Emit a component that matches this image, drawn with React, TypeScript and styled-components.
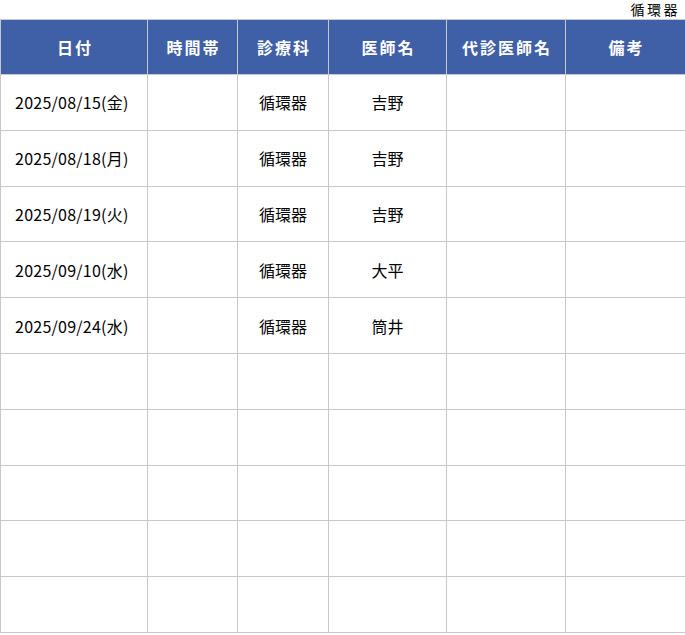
import React from "react";
import styled, { createGlobalStyle } from "styled-components";

const Global = createGlobalStyle`
  html, body { margin: 0; padding: 0; background: #fff; }
  body { font-family: "Noto Sans CJK JP", "Noto Sans", sans-serif; color: #000; }
`;

const Page = styled.div`
  width: 685px;
  display: flex;
  flex-direction: column;
`;

const Caption = styled.div`
  height: 19px;
  display: flex;
  justify-content: flex-end;
  align-items: center;
  padding-right: 5px;
  font-size: 14px;
  letter-spacing: 2.5px;
  line-height: 19px;
`;

const Table = styled.table`
  width: 685px;
  border-collapse: collapse;
  table-layout: fixed;
  border: 1px solid #c8c8c8;
`;

const HeadCell = styled.th`
  background: #3f60a6;
  color: #fff;
  font-weight: 700;
  font-size: 16px;
  letter-spacing: 2px;
  text-indent: 2px;
  text-align: center;
  border: 1px solid #c8c8c8;
  height: 54px;
  padding: 0;
`;

const BodyRow = styled.tr`
  height: 55.8px;
`;

const Cell = styled.td<{ $left?: boolean }>`
  border: 1px solid #c8c8c8;
  font-size: 16px;
  text-align: ${(p) => (p.$left ? "left" : "center")};
  padding: ${(p) => (p.$left ? "0 0 0 14px" : "0")};
  letter-spacing: ${(p) => (p.$left ? "0.25px" : "0")};
  white-space: nowrap;
`;

const widths = [147, 90, 91, 118, 119, 120];
const headers = ["日付", "時間帯", "診療科", "医師名", "代診医師名", "備考"];

const rows: string[][] = [
  ["2025/08/15(金)", "", "循環器", "吉野", "", ""],
  ["2025/08/18(月)", "", "循環器", "吉野", "", ""],
  ["2025/08/19(火)", "", "循環器", "吉野", "", ""],
  ["2025/09/10(水)", "", "循環器", "大平", "", ""],
  ["2025/09/24(水)", "", "循環器", "筒井", "", ""],
  ["", "", "", "", "", ""],
  ["", "", "", "", "", ""],
  ["", "", "", "", "", ""],
  ["", "", "", "", "", ""],
  ["", "", "", "", "", ""],
];

export default function App() {
  return (
    <Page>
      <Global />
      <Caption>循環器</Caption>
      <Table>
        <colgroup>
          {widths.map((w, i) => (
            <col key={i} style={{ width: w }} />
          ))}
        </colgroup>
        <thead>
          <tr>
            {headers.map((h) => (
              <HeadCell key={h}>{h}</HeadCell>
            ))}
          </tr>
        </thead>
        <tbody>
          {rows.map((r, i) => (
            <BodyRow key={i}>
              {r.map((c, j) => (
                <Cell key={j} $left={j === 0}>
                  {c}
                </Cell>
              ))}
            </BodyRow>
          ))}
        </tbody>
      </Table>
    </Page>
  );
}
